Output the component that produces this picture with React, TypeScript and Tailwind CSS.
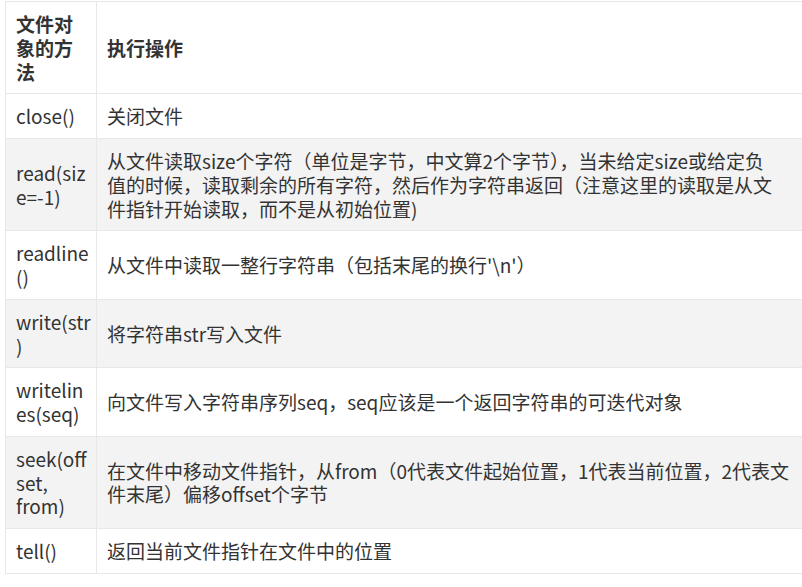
const ROWS: { name: string[]; desc: string[]; gray?: boolean }[] = [
  { name: ['close()'], desc: ['关闭文件'] },
  {
    name: ['read(siz', 'e=-1)'],
    desc: [
      '从文件读取size个字符（单位是字节，中文算2个字节），当未给定size或给定负',
      '值的时候，读取剩余的所有字符，然后作为字符串返回（注意这里的读取是从文',
      '件指针开始读取，而不是从初始位置)',
    ],
    gray: true,
  },
  { name: ['readline', '()'], desc: ["从文件中读取一整行字符串（包括末尾的换行'\\n'）"] },
  { name: ['write(str', ')'], desc: ['将字符串str写入文件'], gray: true },
  { name: ['writelin', 'es(seq)'], desc: ['向文件写入字符串序列seq，seq应该是一个返回字符串的可迭代对象'] },
  {
    name: ['seek(off', 'set,', 'from)'],
    desc: ['在文件中移动文件指针，从from（0代表文件起始位置，1代表当前位置，2代表文', '件末尾）偏移offset个字节'],
    gray: true,
  },
  { name: ['tell()'], desc: ['返回当前文件指针在文件中的位置'] },
]

function Lines({ lines }: { lines: string[] }) {
  return (
    <>
      {lines.map((l, i) => (
        <div key={i} className="whitespace-nowrap">
          {l}
        </div>
      ))}
    </>
  )
}

export default function App() {
  return (
    <div className="w-[802px] h-[587px] overflow-hidden bg-white pt-[1px] pl-[5px] font-['Noto_Sans_CJK_SC',sans-serif] text-[19px] leading-[23.75px] text-[#333]">
      <table className="w-[797px] table-fixed border-collapse">
        <colgroup>
          <col className="w-[91px]" />
          <col />
        </colgroup>
        <tbody>
          <tr>
            <th className="border border-[#e8e8e8] px-[10px] py-[10px] text-left align-middle font-bold">
              <Lines lines={['文件对', '象的方', '法']} />
            </th>
            <th className="border-y border-[#e8e8e8] px-[10px] py-[10px] text-left align-middle font-bold">执行操作</th>
          </tr>
          {ROWS.map((r, i) => (
            <tr key={i} className={r.gray ? 'bg-[#f3f3f3]' : 'bg-white'}>
              <td className="border border-[#e8e8e8] px-[10px] py-[10px] align-middle">
                <Lines lines={r.name} />
              </td>
              <td className="border-y border-[#e8e8e8] px-[10px] py-[10px] align-middle">
                <Lines lines={r.desc} />
              </td>
            </tr>
          ))}
        </tbody>
      </table>
    </div>
  )
}
